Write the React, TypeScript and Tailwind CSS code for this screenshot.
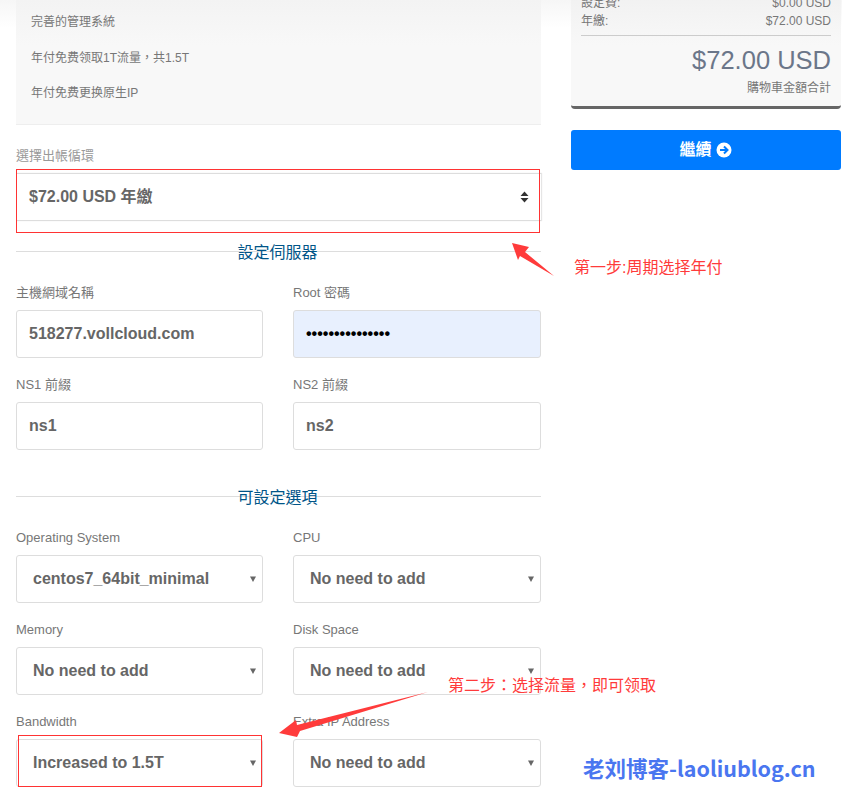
const CJK = { fontFamily: '"Liberation Sans", "Noto Sans CJK TC", sans-serif' }

function Field({ label, children }: { label: string; children: React.ReactNode }) {
  return (
    <div className="mb-[17px]">
      <label className="block h-[19px] pt-[1px] mb-[8px] text-[13px] leading-[18px] text-[#777]">{label}</label>
      {children}
    </div>
  )
}

function TextInput({ value, type = "text", filled = false }: { value: string; type?: string; filled?: boolean }) {
  return (
    <input
      readOnly
      type={type}
      value={value}
      className={`block w-full h-[48px] px-[12px] rounded-[3px] border border-[#ddd] text-[16px] font-bold text-[#666] outline-none ${
        filled ? "bg-[#e8f0fe] !text-black" : "bg-white"
      }`}
    />
  )
}

function SelectBox({ value }: { value: string }) {
  return (
    <div className="relative">
      <select
        defaultValue={value}
        className="block w-full h-[48px] pl-[16px] pr-[24px] appearance-none rounded-[3px] border border-[#ddd] bg-white text-[16px] font-bold text-[#666] outline-none"
      >
        <option>{value}</option>
      </select>
      <svg className="absolute right-[6px] top-[21px] pointer-events-none" width="8" height="7" viewBox="0 0 8 7">
        <path d="M1 0.5h6L4 6z" fill="#666" />
      </svg>
    </div>
  )
}

function Divider({ title, className }: { title: string; className: string }) {
  return (
    <div className={`relative flex justify-center items-center h-[20px] pr-[2px] ${className}`}>
      <div className="absolute inset-x-0 top-[9px] h-px bg-[#ddd]" />
      <span className="relative top-[1px] text-[16px] leading-[20px] text-[#058]">{title}</span>
    </div>
  )
}

export default function App() {
  return (
    <div
      className="relative h-[806px] w-[842px] overflow-hidden bg-[linear-gradient(#f6f6f6,#fff_28px)] flex items-start"
      style={CJK}
    >
      {/* Left column */}
      <div className="w-[525px] ml-[16px] shrink-0">
        <div className="h-[125px] border-b border-[#eee] bg-[linear-gradient(#f3f3f3,#f8f8f8_45px)] pl-[15px] pt-[13px] text-[12px] text-[#777]">
          <p className="h-[35.5px] leading-[18px]">完善的管理系統</p>
          <p className="h-[35.5px] leading-[18px]">年付免费领取1T流量，共1.5T</p>
          <p className="h-[35.5px] leading-[18px]">年付免费更换原生IP</p>
        </div>

        <label className="block mt-[22px] h-[18px] text-[13px] leading-[18px] text-[#999]">
          選擇出帳循環
        </label>
        <div className="mt-[8px] h-[48px] flex items-center justify-between border-y border-[#ddd] bg-white pl-[13px] pr-[12px] shadow-[1px_0_1px_#e5e5e5]">
          <span className="text-[16px] font-bold text-[#666]">$72.00 USD 年繳</span>
          <svg width="9" height="12" viewBox="0 0 9 12">
            <path d="M4.5 0.5L8.5 5H0.5zM4.5 11.5L0.5 7H8.5z" fill="#333" />
          </svg>
        </div>

        <Divider title="設定伺服器" className="mt-[21px]" />

        <div className="mt-[21px] grid grid-cols-[247px_248px] gap-x-[30px]">
          <Field label="主機網域名稱"><TextInput value="518277.vollcloud.com" /></Field>
          <Field label="Root 密碼"><TextInput value="xxxxxxxxxxxxxxx" type="password" filled /></Field>
          <Field label="NS1 前綴"><TextInput value="ns1" /></Field>
          <Field label="NS2 前綴"><TextInput value="ns2" /></Field>
        </div>

        <Divider title="可設定選項" className="mt-[20px]" />

        <div className="mt-[21px] grid grid-cols-[247px_248px] gap-x-[30px]">
          <Field label="Operating System"><SelectBox value="centos7_64bit_minimal" /></Field>
          <Field label="CPU"><SelectBox value="No need to add" /></Field>
          <Field label="Memory"><SelectBox value="No need to add" /></Field>
          <Field label="Disk Space"><SelectBox value="No need to add" /></Field>
          <Field label="Bandwidth"><SelectBox value="Increased to 1.5T" /></Field>
          <Field label="Extra IP Address"><SelectBox value="No need to add" /></Field>
        </div>
      </div>

      {/* Order summary */}
      <div className="w-[270px] ml-[30px] shrink-0">
        <div className="h-[114px] -mt-[5px] rounded-b-[4px] border-b-[3px] border-[#666] bg-[linear-gradient(#f1f1f1,#f8f8f8_50px)] px-[10px] text-[12px] text-[#777]">
          <div className="flex justify-between h-[17px] leading-[17px]">
            <span>設定費:</span>
            <span>$0.00 USD</span>
          </div>
          <div className="flex justify-between h-[18px] leading-[18px]">
            <span>年繳:</span>
            <span>$72.00 USD</span>
          </div>
          <div className="h-px bg-[#ccc] mt-[5px]" />
          <div className="text-right text-[25.5px] leading-[30px] mt-[9px] text-[#6b7689]">$72.00 USD</div>
          <div className="text-right leading-[18px] mt-[4px]">購物車金額合計</div>
        </div>
        <button className="mt-[21px] w-full h-[40px] flex items-center justify-center gap-[4px] pr-[1px] rounded-[3px] bg-[#007bff] text-[16px] font-bold text-white">
          繼續
          <svg width="16" height="16" viewBox="0 0 16 16">
            <circle cx="8" cy="8" r="7.5" fill="#fff" />
            <path d="M4 8h7M8 4.5L11.5 8 8 11.5" stroke="#007bff" strokeWidth="2" fill="none" />
          </svg>
        </button>
      </div>

      {/* Annotations drawn over the page */}
      <div className="absolute left-[16px] top-[169px] w-[524px] h-[64px] border border-[#f33]" />
      <div className="absolute left-[18px] top-[735px] w-[244px] h-[52px] border border-[#f33]" />
      <svg className="absolute inset-0 pointer-events-none" width="842" height="806">
        <polygon points="512,243 529,247 525,252 554,276 520,256 518,260" fill="#ff3b3b" />
        <polygon points="279,733 296,720 297,725 428,692 300,731 297,737" fill="#ff3b3b" />
      </svg>
      <span className="absolute left-[574px] top-[257px] text-[16px] leading-[22px] text-[#ff3b3b]">第一步:周期选择年付</span>
      <span className="absolute left-[448px] top-[675px] text-[16px] leading-[22px] text-[#ff3b3b]">第二步：选择流量，即可领取</span>
      <span className="absolute left-[583px] top-[754px] text-[21.5px] leading-[28px] font-bold text-[#4a76f0]" style={{ fontFamily: '"Noto Sans CJK SC", sans-serif' }}>
        老刘博客-laoliublog.cn
      </span>
    </div>
  )
}
